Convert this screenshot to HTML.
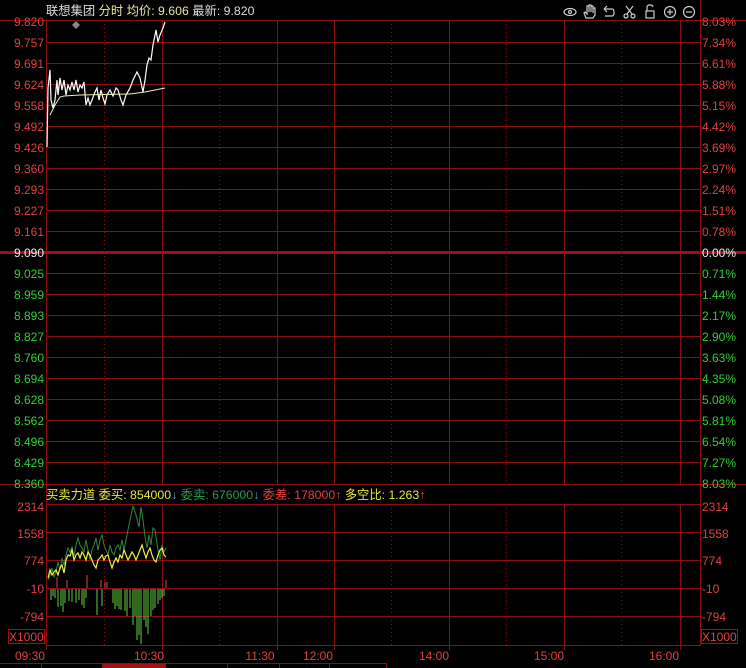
<!DOCTYPE html>
<html><head><meta charset="utf-8"><style>
body{margin:0;background:#000;width:746px;height:668px;overflow:hidden;font-family:"Liberation Sans","Noto Sans CJK SC",sans-serif}
svg{display:block}
text{font-family:"Liberation Sans","Noto Sans CJK SC",sans-serif;font-size:12px}
</style></head><body>
<svg width="746" height="668" viewBox="0 0 746 668">
<rect width="746" height="668" fill="#000"/>
<g stroke="#8a0e0e" stroke-width="1" fill="none">
<line x1="0" y1="20.5" x2="746" y2="20.5"/>
<line x1="46.5" y1="20" x2="46.5" y2="646"/>
<line x1="700.5" y1="0" x2="700.5" y2="646"/>
<line x1="46" y1="42.5" x2="700" y2="42.5"/><line x1="46" y1="63.5" x2="700" y2="63.5"/>
<line x1="46" y1="84.5" x2="700" y2="84.5"/><line x1="46" y1="105.5" x2="700" y2="105.5"/>
<line x1="46" y1="126.5" x2="700" y2="126.5"/><line x1="46" y1="147.5" x2="700" y2="147.5"/>
<line x1="46" y1="168.5" x2="700" y2="168.5"/><line x1="46" y1="189.5" x2="700" y2="189.5"/>
<line x1="46" y1="210.5" x2="700" y2="210.5"/><line x1="46" y1="231.5" x2="700" y2="231.5"/>
<line x1="46" y1="273.5" x2="700" y2="273.5"/><line x1="46" y1="294.5" x2="700" y2="294.5"/>
<line x1="46" y1="315.5" x2="700" y2="315.5"/><line x1="46" y1="336.5" x2="700" y2="336.5"/>
<line x1="46" y1="357.5" x2="700" y2="357.5"/><line x1="46" y1="378.5" x2="700" y2="378.5"/>
<line x1="46" y1="399.5" x2="700" y2="399.5"/><line x1="46" y1="420.5" x2="700" y2="420.5"/>
<line x1="46" y1="441.5" x2="700" y2="441.5"/><line x1="46" y1="462.5" x2="700" y2="462.5"/>
<line x1="0" y1="484.5" x2="746" y2="484.5"/>
<line x1="46" y1="504.5" x2="700" y2="504.5"/>
<line x1="46" y1="532.5" x2="700" y2="532.5"/><line x1="46" y1="560.5" x2="700" y2="560.5"/>
<line x1="46" y1="588.5" x2="700" y2="588.5"/><line x1="46" y1="616.5" x2="700" y2="616.5"/>
<line x1="46" y1="645.5" x2="700" y2="645.5"/>
<line x1="162.5" y1="20" x2="162.5" y2="484"/><line x1="277.5" y1="20" x2="277.5" y2="484"/>
<line x1="334.5" y1="20" x2="334.5" y2="484"/><line x1="449.5" y1="20" x2="449.5" y2="484"/>
<line x1="564.5" y1="20" x2="564.5" y2="484"/><line x1="680.5" y1="20" x2="680.5" y2="484"/>
<line x1="162.5" y1="504" x2="162.5" y2="650"/><line x1="277.5" y1="504" x2="277.5" y2="650"/>
<line x1="334.5" y1="504" x2="334.5" y2="650"/><line x1="449.5" y1="504" x2="449.5" y2="650"/>
<line x1="564.5" y1="504" x2="564.5" y2="650"/><line x1="680.5" y1="504" x2="680.5" y2="650"/>
<line x1="46.5" y1="646" x2="46.5" y2="650"/>
</g>
<g stroke="#8a0e0e" stroke-width="1" stroke-dasharray="1,3">
<line x1="104.5" y1="20" x2="104.5" y2="484"/><line x1="219.5" y1="20" x2="219.5" y2="484"/>
<line x1="391.5" y1="20" x2="391.5" y2="484"/><line x1="506.5" y1="20" x2="506.5" y2="484"/>
<line x1="621.5" y1="20" x2="621.5" y2="484"/>
<line x1="104.5" y1="504" x2="104.5" y2="645"/><line x1="219.5" y1="504" x2="219.5" y2="645"/>
<line x1="391.5" y1="504" x2="391.5" y2="645"/><line x1="506.5" y1="504" x2="506.5" y2="645"/>
<line x1="621.5" y1="504" x2="621.5" y2="645"/>
</g>
<line x1="0" y1="252.5" x2="746" y2="252.5" stroke="#a01010" stroke-width="3"/>
<text x="46" y="15" fill="#ddd" style="font-size:12.3px">联想集团 <tspan fill="#e8e8a0">分时 均价: 9.606</tspan> <tspan fill="#ddd">最新: 9.820</tspan></text>
<g stroke="#ccc" stroke-width="1.2" fill="none">
<ellipse cx="570" cy="12" rx="6" ry="3.5"/><circle cx="570" cy="12" r="1.5"/>
<path d="M586 18 L584 13 L585 12 L587 14 L587 6 L589 6 L589 12 L589 5 L591 5 L591 12 L591 6 L593 6 L593 13 L593 8 L595 8 L595 15 L593 18 Z"/>
<path d="M604 9 L612 9 Q614 9 614 12.5 Q614 16 612 16 L605 16 M604 9 L607 6 M604 9 L607 12"/>
<circle cx="626" cy="16" r="2"/><circle cx="633" cy="16" r="2"/><path d="M627 14 L633 6 M632 14 L626 6"/>
<rect x="646" y="11" width="8" height="7"/><path d="M647 11 L647 7 Q647 5 650 5 Q653 5 653 7"/>
<circle cx="670" cy="12" r="5.5"/><path d="M667 12 L673 12 M670 9 L670 15"/>
<circle cx="689" cy="12" r="5.5"/><path d="M686 12 L692 12"/>
</g>
<g text-anchor="end" font-size="12">
<text x="44" y="26" fill="#e04040">9.820</text><text x="44" y="47" fill="#e04040">9.757</text>
<text x="44" y="68" fill="#e04040">9.691</text><text x="44" y="89" fill="#e04040">9.624</text>
<text x="44" y="110" fill="#e04040">9.558</text><text x="44" y="131" fill="#e04040">9.492</text>
<text x="44" y="152" fill="#e04040">9.426</text><text x="44" y="173" fill="#e04040">9.360</text>
<text x="44" y="194" fill="#e04040">9.293</text><text x="44" y="215" fill="#e04040">9.227</text>
<text x="44" y="236" fill="#e04040">9.161</text><text x="44" y="257" fill="#eee">9.090</text>
<text x="44" y="278" fill="#30d030">9.025</text><text x="44" y="299" fill="#30d030">8.959</text>
<text x="44" y="320" fill="#30d030">8.893</text><text x="44" y="341" fill="#30d030">8.827</text>
<text x="44" y="362" fill="#30d030">8.760</text><text x="44" y="383" fill="#30d030">8.694</text>
<text x="44" y="404" fill="#30d030">8.628</text><text x="44" y="425" fill="#30d030">8.562</text>
<text x="44" y="446" fill="#30d030">8.496</text><text x="44" y="467" fill="#30d030">8.429</text>
<text x="44" y="488" fill="#30d030">8.360</text>
<text x="44" y="511" fill="#e04040">2314</text><text x="44" y="538" fill="#e04040">1558</text>
<text x="44" y="565" fill="#e04040">774</text><text x="44" y="593" fill="#e04040">-10</text>
<text x="44" y="621" fill="#e04040">-794</text>
</g>
<rect x="8.5" y="629.5" width="36" height="14" fill="none" stroke="#a01010"/>
<text x="9" y="641" fill="#e04040">X1000</text>
<g font-size="12">
<text x="702" y="26" fill="#e04040">8.03%</text><text x="702" y="47" fill="#e04040">7.34%</text>
<text x="702" y="68" fill="#e04040">6.61%</text><text x="702" y="89" fill="#e04040">5.88%</text>
<text x="702" y="110" fill="#e04040">5.15%</text><text x="702" y="131" fill="#e04040">4.42%</text>
<text x="702" y="152" fill="#e04040">3.69%</text><text x="702" y="173" fill="#e04040">2.97%</text>
<text x="702" y="194" fill="#e04040">2.24%</text><text x="702" y="215" fill="#e04040">1.51%</text>
<text x="702" y="236" fill="#e04040">0.78%</text><text x="702" y="257" fill="#eee">0.00%</text>
<text x="702" y="278" fill="#30d030">0.71%</text><text x="702" y="299" fill="#30d030">1.44%</text>
<text x="702" y="320" fill="#30d030">2.17%</text><text x="702" y="341" fill="#30d030">2.90%</text>
<text x="702" y="362" fill="#30d030">3.63%</text><text x="702" y="383" fill="#30d030">4.35%</text>
<text x="702" y="404" fill="#30d030">5.08%</text><text x="702" y="425" fill="#30d030">5.81%</text>
<text x="702" y="446" fill="#30d030">6.54%</text><text x="702" y="467" fill="#30d030">7.27%</text>
<text x="702" y="488" fill="#30d030">8.03%</text>
<text x="702" y="511" fill="#e04040">2314</text><text x="702" y="538" fill="#e04040">1558</text>
<text x="702" y="565" fill="#e04040">774</text><text x="702" y="593" fill="#e04040">-10</text>
<text x="702" y="621" fill="#e04040">-794</text>
</g>
<rect x="701.5" y="629.5" width="36" height="14" fill="none" stroke="#a01010"/>
<text x="702" y="641" fill="#e04040">X1000</text>
<text x="46" y="499" fill="#e8e830" style="font-size:12.3px">买卖力道 委买: 854000<tspan fill="#4aa0d0">↓</tspan><tspan fill="#2a9a50"> 委卖: 676000</tspan><tspan fill="#4aa0d0">↓</tspan><tspan fill="#e04040"> 委差: 178000↑</tspan> 多空比: 1.263<tspan fill="#e04040">↑</tspan></text>
<g fill="#e04040" text-anchor="middle">
<text x="30" y="660">09:30</text><text x="149" y="660">10:30</text><text x="260" y="660">11:30</text>
<text x="318" y="660">12:00</text><text x="434" y="660">14:00</text><text x="549" y="660">15:00</text><text x="664" y="660">16:00</text>
</g>
<g stroke="#8a0e0e" fill="none"><path d="M0 663.5H386 M41.5 663V668 M102.5 663V668 M165.5 663V668 M227.5 663V668 M279.5 663V668 M329.5 663V668 M386.5 663V668"/></g>
<rect x="103" y="664" width="62" height="4" fill="#a01010"/>
<path d="M76 21 L80 25 L76 29 L72 25Z" fill="#888"/>
<polyline fill="none" stroke="#fff" stroke-width="1.2" points="47,147 48,88 50,70 51,100 53,108 55,100 57,80 58,95 60,78 62,90 64,80 66,95 68,85 70,90 72,82 74,90 76,80 78,92 80,85 82,88 84,82 86,105 88,98 90,105 92,100 95,92 97,88 99,100 101,90 103,98 105,104 107,95 110,90 113,96 116,88 118,90 121,100 123,105 126,95 130,88 133,80 137,72 140,78 143,92 145,80 147,65 149,58 151,60 153,45 156,30 158,42 160,35 163,28 165,22"/>
<polyline fill="none" stroke="#f0f0b0" stroke-width="1" points="50,115 55,105 60,97 64,96 80,95 130,94 145,92 155,90 165,88"/>
<g stroke="#60d040" stroke-width="1">
<path d="M51 589V600 M53 589V596 M55 589V598 M58 589V607 M61 589V606 M63 589V612 M65 589V603 M69 589V601 M72 589V602 M76 589V603 M79 589V600 M82 589V605 M84 589V608 M86 589V598 M97 589V615 M102 589V606 M113 589V603 M115 589V609 M117 589V606 M119 589V609 M121 589V610 M125 589V611 M127 589V616 M130 589V608 M133 589V625 M135 589V616 M137 589V640 M139 589V635 M141 589V644 M144 589V620 M146 589V627 M148 589V634 M151 589V616 M153 589V610 M155 589V608 M158 589V604 M160 589V600 M162 589V598 M164 589V596"/>
</g>
<g stroke="#e04040" stroke-width="1">
<path d="M57 588V577 M67 588V580 M87 588V575 M101 588V580 M105 588V582 M107 588V582 M166 588V580"/>
</g>
<polyline fill="none" stroke="#2a8a3a" stroke-width="1" points="48,580 50,575 52,568 54,577 56,572 58,562 60,570 62,558 64,565 66,555 68,548 70,552 72,547 74,556 76,545 78,538 80,545 82,548 84,552 86,540 88,550 90,560 92,550 94,545 96,538 98,550 100,540 102,535 104,545 106,550 108,555 110,545 112,552 114,555 116,548 118,545 120,550 122,540 124,550 127,535 130,520 133,506 136,515 139,527 141,507 143,520 145,537 147,548 149,535 151,545 153,528 155,530 158,550 160,560 162,545 164,552 166,548"/>
<polyline fill="none" stroke="#f0f040" stroke-width="1.2" points="48,578 50,570 52,575 54,572 56,570 58,575 60,568 62,565 64,573 66,560 68,555 70,556 72,550 74,560 76,555 78,553 80,558 82,552 84,555 86,560 88,552 90,555 92,560 94,565 96,568 98,560 100,558 102,555 104,560 106,556 108,555 110,562 112,568 114,562 116,558 118,562 120,555 122,558 124,550 126,555 128,560 130,556 132,552 134,555 136,560 138,555 140,550 142,545 144,552 146,558 148,552 150,548 152,555 154,560 156,562 158,555 160,550 162,548 164,555 166,557"/>
</svg>
</body></html>
